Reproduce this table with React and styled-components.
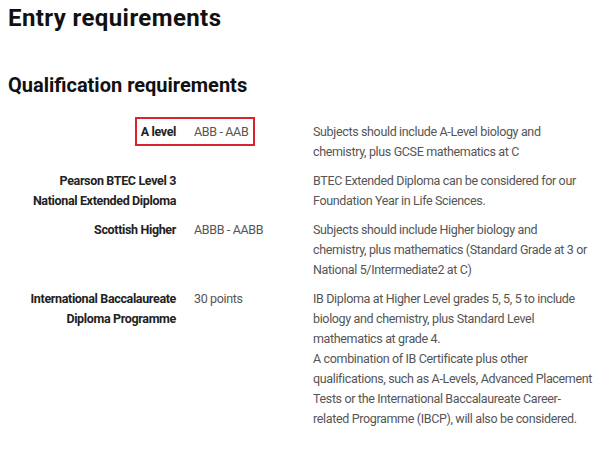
import React from 'react';
import styled, {createGlobalStyle} from 'styled-components';

const GlobalStyle = createGlobalStyle`
    body {
        margin: 0;
        background: #fff;
        font-family: Roboto, 'Liberation Sans', sans-serif;
    }
`;

const Page = styled.main`
    padding: 4px 8px 0 8px;
    color: #222;
`;

const Title = styled.h1`
    margin: 0;
    font-size: 24px;
    line-height: 28px;
    letter-spacing: 0.4px;
    font-weight: 700;
    color: #111;
`;

const Subtitle = styled.h2`
    margin: 41px 0 0 0;
    font-size: 20px;
    line-height: 24px;
    font-weight: 700;
    color: #111;
`;

const Table = styled.div`
    margin-top: 25px;
    display: grid;
    grid-template-columns: 168px 101px 279.5px;
    column-gap: 18px;
    row-gap: 9px;
    font-size: 12.5px;
    letter-spacing: -0.35px;
    line-height: 20px;
`;

const Label = styled.div`
    grid-column: 1;
    text-align: right;
    font-weight: 700;
    color: #222;
`;

const Grade = styled.div`
    grid-column: 2;
    color: #555;
`;

const Detail = styled.div`
    grid-column: 3;
    color: #555;
`;

const Highlight = styled.div`
    grid-row: ${p => p.$row};
    grid-column: 1 / 3;
    align-self: start;
    margin: -5px 0 0 127px;
    width: 120px;
    height: 29px;
    border: 2px solid #d8222c;
    box-sizing: border-box;
    pointer-events: none;
`;

const rows = [
    {
        label: ['A level'],
        grade: 'ABB - AAB',
        detail: ['Subjects should include A-Level biology and chemistry, plus GCSE mathematics at C'],
        marked: true,
    },
    {
        label: ['Pearson BTEC Level 3', 'National Extended Diploma'],
        grade: '',
        detail: ['BTEC Extended Diploma can be considered for our Foundation Year in Life Sciences.'],
    },
    {
        label: ['Scottish Higher'],
        grade: 'ABBB - AABB',
        detail: ['Subjects should include Higher biology and chemistry, plus mathematics (Standard Grade at 3 or National 5/Intermediate2 at C)'],
    },
    {
        label: ['International Baccalaureate', 'Diploma Programme'],
        grade: '30 points',
        detail: [
            'IB Diploma at Higher Level grades 5, 5, 5 to include biology and chemistry, plus Standard Level mathematics at grade 4.',
            'A combination of IB Certificate plus other qualifications, such as A-Levels, Advanced Placement Tests or the International Baccalaureate Career-related Programme (IBCP), will also be considered.',
        ],
    },
];

const App = () => (
    <>
        <GlobalStyle />
        <Page>
            <Title>Entry requirements</Title>
            <Subtitle>Qualification requirements</Subtitle>
            <Table>
                {rows.map((row, i) => (
                    <React.Fragment key={i}>
                        <Label style={{gridRow: i + 1}}>
                            {row.label.map((l, j) => <div key={j}>{l}</div>)}
                        </Label>
                        <Grade style={{gridRow: i + 1}}>{row.grade}</Grade>
                        <Detail style={{gridRow: i + 1}}>
                            {row.detail.map((d, j) => <div key={j}>{d}</div>)}
                        </Detail>
                        {row.marked && <Highlight $row={i + 1} />}
                    </React.Fragment>
                ))}
            </Table>
        </Page>
    </>
);

export default App;
